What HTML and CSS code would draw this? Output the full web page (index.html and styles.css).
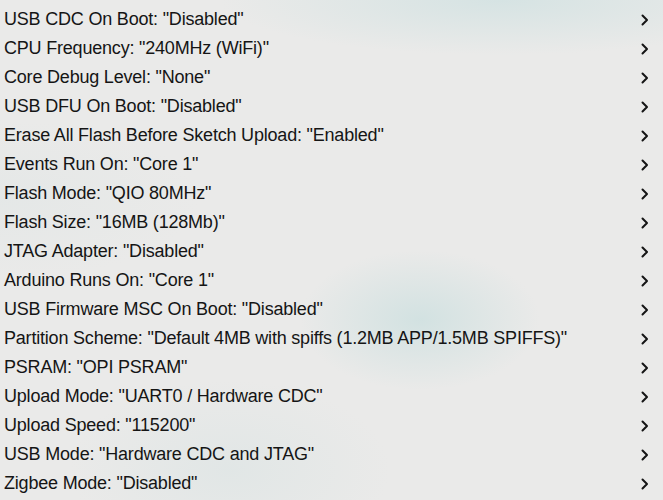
FILE: index.html
```html
<!DOCTYPE html>
<html>
<head>
<meta charset="utf-8">
<link rel="stylesheet" href="styles.css">
</head>
<body>
<ul class="menu">
  <li class="item"><span class="label">USB CDC On Boot: "Disabled"</span><svg class="chev" viewBox="0 0 8 12"><path d="M1.5 1.5 L6 6 L1.5 10.5"/></svg></li>
  <li class="item"><span class="label">CPU Frequency: "240MHz (WiFi)"</span><svg class="chev" viewBox="0 0 8 12"><path d="M1.5 1.5 L6 6 L1.5 10.5"/></svg></li>
  <li class="item"><span class="label">Core Debug Level: "None"</span><svg class="chev" viewBox="0 0 8 12"><path d="M1.5 1.5 L6 6 L1.5 10.5"/></svg></li>
  <li class="item"><span class="label">USB DFU On Boot: "Disabled"</span><svg class="chev" viewBox="0 0 8 12"><path d="M1.5 1.5 L6 6 L1.5 10.5"/></svg></li>
  <li class="item"><span class="label">Erase All Flash Before Sketch Upload: "Enabled"</span><svg class="chev" viewBox="0 0 8 12"><path d="M1.5 1.5 L6 6 L1.5 10.5"/></svg></li>
  <li class="item"><span class="label">Events Run On: "Core 1"</span><svg class="chev" viewBox="0 0 8 12"><path d="M1.5 1.5 L6 6 L1.5 10.5"/></svg></li>
  <li class="item"><span class="label">Flash Mode: "QIO 80MHz"</span><svg class="chev" viewBox="0 0 8 12"><path d="M1.5 1.5 L6 6 L1.5 10.5"/></svg></li>
  <li class="item"><span class="label">Flash Size: "16MB (128Mb)"</span><svg class="chev" viewBox="0 0 8 12"><path d="M1.5 1.5 L6 6 L1.5 10.5"/></svg></li>
  <li class="item"><span class="label">JTAG Adapter: "Disabled"</span><svg class="chev" viewBox="0 0 8 12"><path d="M1.5 1.5 L6 6 L1.5 10.5"/></svg></li>
  <li class="item"><span class="label">Arduino Runs On: "Core 1"</span><svg class="chev" viewBox="0 0 8 12"><path d="M1.5 1.5 L6 6 L1.5 10.5"/></svg></li>
  <li class="item"><span class="label">USB Firmware MSC On Boot: "Disabled"</span><svg class="chev" viewBox="0 0 8 12"><path d="M1.5 1.5 L6 6 L1.5 10.5"/></svg></li>
  <li class="item"><span class="label">Partition Scheme: "Default 4MB with spiffs (1.2MB APP/1.5MB SPIFFS)"</span><svg class="chev" viewBox="0 0 8 12"><path d="M1.5 1.5 L6 6 L1.5 10.5"/></svg></li>
  <li class="item"><span class="label">PSRAM: "OPI PSRAM"</span><svg class="chev" viewBox="0 0 8 12"><path d="M1.5 1.5 L6 6 L1.5 10.5"/></svg></li>
  <li class="item"><span class="label">Upload Mode: "UART0 / Hardware CDC"</span><svg class="chev" viewBox="0 0 8 12"><path d="M1.5 1.5 L6 6 L1.5 10.5"/></svg></li>
  <li class="item"><span class="label">Upload Speed: "115200"</span><svg class="chev" viewBox="0 0 8 12"><path d="M1.5 1.5 L6 6 L1.5 10.5"/></svg></li>
  <li class="item"><span class="label">USB Mode: "Hardware CDC and JTAG"</span><svg class="chev" viewBox="0 0 8 12"><path d="M1.5 1.5 L6 6 L1.5 10.5"/></svg></li>
  <li class="item"><span class="label">Zigbee Mode: "Disabled"</span><svg class="chev" viewBox="0 0 8 12"><path d="M1.5 1.5 L6 6 L1.5 10.5"/></svg></li>
</ul>
</body>
</html>
```
FILE: styles.css
```css
html, body {
  margin: 0;
  padding: 0;
  height: 100%;
}
body {
  background-color: #eaeae9;
  background-image:
    radial-gradient(ellipse 120px 70px at 420px 320px, rgba(200, 222, 222, 0.7), rgba(200, 222, 222, 0) 100%),
    radial-gradient(ellipse 280px 55px at 500px 0px, rgba(210, 226, 226, 0.85), rgba(210, 226, 226, 0) 100%),
    radial-gradient(ellipse 160px 90px at 230px 470px, rgba(214, 226, 226, 0.45), rgba(214, 226, 226, 0) 100%),
    radial-gradient(ellipse 200px 80px at 0px 200px, rgba(220, 228, 228, 0.4), rgba(220, 228, 228, 0) 100%);
  font-family: "Liberation Sans", Arial, sans-serif;
  color: #151515;
  overflow: hidden;
}
.menu {
  list-style: none;
  margin: 0;
  padding: 5px 0 0 0;
}
.item {
  height: 29px;
  display: flex;
  align-items: center;
  justify-content: space-between;
  padding: 0 14px 0 4px;
}
.label {
  font-size: 18px;
  line-height: 29px;
  letter-spacing: -0.2px;
  white-space: nowrap;
}
.chev {
  width: 8px;
  height: 12px;
  fill: none;
  stroke: #151515;
  stroke-width: 2;
  stroke-linecap: round;
  stroke-linejoin: round;
}
```
